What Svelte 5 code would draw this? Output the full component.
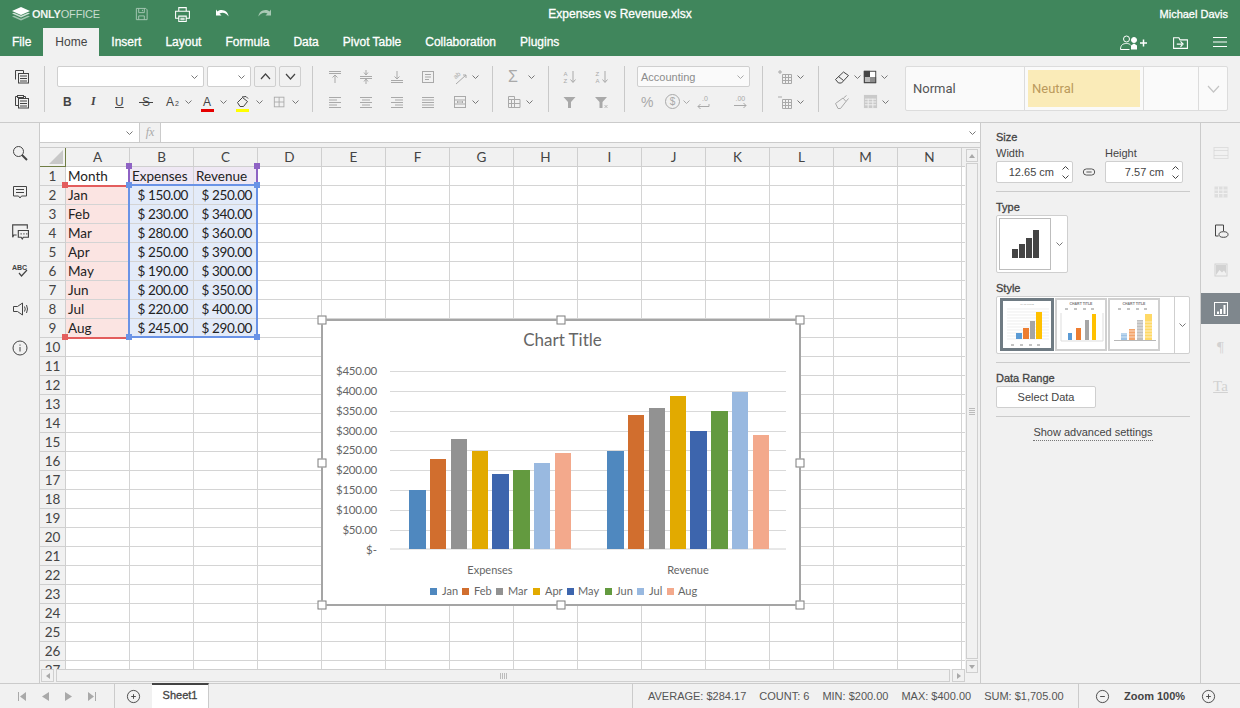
<script lang="ts">
  const TABS = ["File", "Home", "Insert", "Layout", "Formula", "Data", "Pivot Table", "Collaboration", "Plugins"];
  const COLS = ["A", "B", "C", "D", "E", "F", "G", "H", "I", "J", "K", "L", "M", "N", "O"];
  const DATA = [
    ["Month", "Expenses", "Revenue"],
    ["Jan", "$ 150.00", "$ 250.00"],
    ["Feb", "$ 230.00", "$ 340.00"],
    ["Mar", "$ 280.00", "$ 360.00"],
    ["Apr", "$ 250.00", "$ 390.00"],
    ["May", "$ 190.00", "$ 300.00"],
    ["Jun", "$ 200.00", "$ 350.00"],
    ["Jul", "$ 220.00", "$ 400.00"],
    ["Aug", "$ 245.00", "$ 290.00"],
  ];
  const ROWS = Array.from({ length: 27 }, (_, i) => i + 1);

  const COLORS = ["#4f88bf", "#d16e2e", "#929292", "#e2aa00", "#3d65ad", "#639a3f", "#99b9e0", "#f3a98c"];
  const MONTHS = ["Jan", "Feb", "Mar", "Apr", "May", "Jun", "Jul", "Aug"];
  const BAR_X = [
    [409, 17], [430, 16], [451, 16], [472, 16], [492, 17], [513, 17], [534, 16], [555, 16],
  ];
  const REV_X = [
    [607, 17], [628, 16], [649, 16], [670, 16], [690, 17], [711, 17], [732, 16], [753, 16],
  ];
  const EXPENSES = [150, 230, 280, 250, 190, 200, 220, 245];
  const REVENUE = [250, 340, 360, 390, 300, 350, 400, 290];
  const AXIS = [450, 400, 350, 300, 250, 200, 150, 100, 50];
  const GRID_Y = [371, 391, 411, 431, 450, 470, 490, 510, 530];
  const LEGEND = [
    [430, 442], [462, 474], [496, 508], [533, 545], [567, 578], [605, 616], [637, 649], [667, 678],
  ];
  const barH = (v: number) => Math.round(v * 0.393);

  const HANDLES = [
    [0, 0], [50, 0], [100, 0], [0, 50], [100, 50], [0, 100], [50, 100], [100, 100],
  ];
  const RED_H = [[25, 37], [25, 189]];
  const BLUE_H = [[89, 37], [217, 37], [89, 189], [217, 189]];
  const PURPLE_H = [[89, 18], [217, 18]];

  const T = 'font-family="Liberation Sans" stroke="none" fill="currentColor"';
  const ICONS: Record<string, string> = {
    copy: '<path d="M1.5 10.5v-9h8v2.5M3 6h-.1"/><rect x="4.5" y="4.5" width="10" height="9.5" fill="#f1f1f1"/><path d="M6 7h7M6 9.5h7M6 12h7"/>',
    paste: '<path d="M3.5 2.5h-2v9h2.5M9.5 2.5h2v2"/><rect x="3.5" y="1.5" width="6" height="2"/><rect x="4.5" y="4.5" width="10" height="9.5" fill="#f1f1f1"/><path d="M6 7h7M6 9.5h7M6 12h7"/>',
    alTop: '<path d="M2 2.5h12M2 4.5h12M8 14V6M5.5 8.5 8 6l2.5 2.5"/>',
    alMid: '<path d="M2 7.5h12M2 9.5h12M8 1v5M8 11v4M6 3.5 8 6l2-2.5M6 12.5 8 10l2 2.5"/>',
    alBot: '<path d="M2 11.5h12M2 13.5h12M8 2v8M5.5 7.5 8 10l2.5-2.5"/>',
    wrap: '<rect x="2.5" y="2.5" width="11" height="11"/><path d="M5 5.5h6M5 8h6M5 10.5h4"/>',
    bgrid: '<rect x="1.500" y="2.500" width="11" height="11"/><path d="M7 2.500v11M1.500 8h11"/>',
    orient: `<text x="2" y="8" font-size="6.5" transform="rotate(-40 6 7)" ${T}>ab</text><path d="M4 15 14 6M14 6h-3M14 6v3"/>`,
    left: '<path d="M2 3.5h12M2 6h8M2 8.5h12M2 11h8M2 13.5h12"/>',
    center: '<path d="M2 3.5h12M4 6h8M2 8.5h12M4 11h8M2 13.5h12"/>',
    right: '<path d="M2 3.5h12M6 6h8M2 8.5h12M6 11h8M2 13.5h12"/>',
    just: '<path d="M2 3.5h12M2 6h12M2 8.5h12M2 11h12M2 13.5h12"/>',
    merge: '<rect x="2.5" y="2.5" width="11" height="11"/><path d="M2.5 6h11M2.5 10h11M5 8h6M6 7l-1 1 1 1M10 7l1 1-1 1"/>',
    table: '<path d="M2.5 2.5h6v3h5.500v8h-11.500zM2.500 5.500h6M8.500 5.500v8M2.500 9.500h11.500"/><path d="M5.500 5.500v8"/>',
    sortAZ: `<text x="1.500" y="6.500" font-size="6" ${T}>A</text><text x="1.500" y="13.500" font-size="6" ${T}>Z</text><path d="M11 2v11M8.500 10.500 11 13.500l2.500-3"/>`,
    sortZA: `<text x="1.500" y="6.500" font-size="6" ${T}>Z</text><text x="1.500" y="13.500" font-size="6" ${T}>A</text><path d="M11 2v11M8.500 10.500 11 13.500l2.500-3"/>`,
    filter: '<path d="M1.500 3h12l-4.500 5v6h-3v-6z" fill="currentColor" stroke="none"/>',
    filterX: '<path d="M1 3h12l-4.500 5v6h-3v-6z" fill="currentColor" stroke="none"/><path d="M10.500 11l3 3M13.500 11l-3 3" stroke-width=".8"/>',
    decLess: `<text x="7" y="6.500" font-size="7" ${T}>.0</text><path d="M14 10v2.500H3M5.500 10 3 12.500 5.500 15"/>`,
    decMore: `<text x="3.500" y="6.500" font-size="7" ${T}>.00</text><path d="M2 11.500h12M11.500 9 14 11.500 11.500 14"/>`,
    rowAdd: '<path d="M1 3h4M3 1v4"/><path d="M5.500 5.500h9v9h-9zM8.500 5.500v9M11.500 5.500v9M5.500 8.500h9M5.500 11.500h9"/>',
    rowDel: '<path d="M1 3h4"/><path d="M5.500 5.500h9v9h-9zM8.500 5.500v9M11.500 5.500v9M5.500 8.500h9M5.500 11.500h9"/>',
    eraser: '<path d="M1.500 10.500 9.500 3l5 3.500-7 7.500h-3zM4.500 7.500l5 4"/>',
    checker: '<rect x="1.500" y="1.500" width="13" height="13" fill="#bbb"/><rect x="1" y="1" width="7" height="7" fill="currentColor" stroke="none"/><rect x="8" y="8" width="7" height="7" fill="#8c8c8c" stroke="none"/><rect x="8" y="1" width="7" height="7" fill="#fff" stroke="none"/><rect x="1.500" y="1.500" width="13" height="13"/>',
    brush: '<path d="M1.500 9.500 9 4l3 3.500-5.500 7h-2.500zM9.500 4l3-2.500M12 7.500l2.500-3"/>',
    tstyle: '<rect x="1" y="1" width="14" height="14" fill="currentColor" stroke="none" opacity=".55"/><path d="M2 5.500h12M2 8.500h12M2 11.500h12M5.500 5v10M10.500 5v10" stroke="#f1f1f1"/>',
    search: '<circle cx="6.500" cy="6.500" r="5"/><path d="M10 10l5 5" stroke-width="2"/>',
    comment: '<path d="M1.500 2.500h13v9.500h-5l-1.500 2-1.500-2h-5z"/><path d="M4 5.500h8M4 8.500h8"/>',
    chat: '<path d="M5 11.500H2.500l-1 2v-11h13V6"/><path d="M6.500 7.500h9v6h-4.500l-1 1.500-1-1.500h-2.500z" fill="#f1f1f1"/><path d="M8.500 10.500h1M11 10.500h1M13.500 10.500h1"/>',
    spell: `<text x="0" y="7.500" font-size="7" font-weight="700" ${T}>ABC</text><path d="M7 11l2.500 3L15 8" stroke-width="1.200"/>`,
    speak: '<path d="M1.500 5.500h4L10.500 2v12l-5-3.500h-4zM12.500 5.500q1.500 2.500 0 5M14.500 4q2 4 0 8"/>',
    info: '<circle cx="8" cy="8" r="7"/><path d="M8 7v4.500M8 4.500v1.200"/>',
    link: '<rect x="1.500" y="4.500" width="13" height="7" rx="3.500"/><path d="M5 8h6"/>',
    rHeader: '<rect x="1" y="2.500" width="14" height="11" opacity=".6"/><path d="M1 5.500h14M1 10.500h14" opacity=".6"/>',
    rTable: '<rect x="1.500" y="2.500" width="13" height="11" fill="currentColor" opacity=".6" stroke="none"/><path d="M1.500 6h13M1.500 9.500h13M5.500 2.500v11M10 2.500v11" stroke="#f1f1f1"/>',
    rShape: '<path d="M10.500 8V2H2.500v11h3"/><ellipse cx="10.500" cy="11.500" rx="4.500" ry="2.800"/>',
    rImage: '<rect x="2" y="2" width="12" height="12"/><path d="M3 13l3.500-5 2.500 2.500 2-2 2 3V3H3z" fill="currentColor" stroke="none"/>',
    rChart: '<rect x="1.500" y="1.500" width="13" height="13"/><path d="M4 10.500h2v2.500h-2zM7 8h2v5h-2zM10.500 4h2v9h-2z" fill="currentColor" stroke="none"/>',
    save: '<path d="M2.500 1.500h10l1.500 1.500v10.500h-11.500zM5 1.500v4.500h6v-4.500M5 13.500v-4h6v4M9 3v1.500"/>',
    print: '<path d="M4.500 5V1.500h7V5M4.500 11.500h-3v-6.500h13v6.500h-3M4.500 9.500h7v5h-7zM6 11.500h4M6 13h4"/>',
    undo: '<path d="M1 3.500v6h5.500l-2-2c3-1.500 6.500-1 9 3 0-5-6.500-8.500-11-5z" fill="currentColor" stroke="none"/>',
    redo: '<path d="M15 3.500v6h-5.500l2-2c-3-1.500-6.500-1-9 3 0-5 6.500-8.500 11-5z" fill="currentColor" stroke="none"/>',
    folder: '<path d="M1.500 3.500v10h13v-8h-7l-1-2zM4.500 9.500h5M8 7l2.500 2.500L8 12" />',
    plus: '<circle cx="8" cy="8" r="6.500"/><path d="M5.500 8h5M8 5.500v5"/>',
    minus: '<circle cx="8" cy="8" r="6.500"/><path d="M5.500 8h5"/>',
  };
</script>

{#snippet ico(name: string, size = 16)}
  <svg class="ico" width={size} height={size} viewBox="0 0 16 16" fill="none" stroke="currentColor">{@html ICONS[name]}</svg>
{/snippet}

{#snippet caret(color = "#777")}
  <svg class="caret" width="7" height="4" viewBox="0 0 7 4" fill="none" stroke={color}><path d="M.5.5l3 3 3-3" /></svg>
{/snippet}

<div class="app">
  <header class="title-bar">
    <div class="logo">
      <svg width="20" height="14" viewBox="0 0 20 14">
        <path d="M10 0l9 4-9 4-9-4z" fill="#fff" />
        <path d="M1 6.500l2-.8 7 3 7-3 2 .8-9 4z" fill="#fff" opacity=".75" />
        <path d="M1 9.500l2-.8 7 3 7-3 2 .8-9 4z" fill="#fff" opacity=".5" />
      </svg>
      <span class="logo-text">ONLY<span class="logo-thin">OFFICE</span></span>
    </div>
    <div class="quick">
      <span class="q off">{@render ico("save", 15)}</span>
      <span class="q">{@render ico("print", 17)}</span>
      <span class="q">{@render ico("undo", 16)}</span>
      <span class="q off">{@render ico("redo", 16)}</span>
    </div>
    <div class="doc-title">Expenses vs Revenue.xlsx</div>
    <div class="user">Michael Davis</div>
  </header>

  <nav class="tabs">
    {#each TABS as tab}
      <span class="tab" class:active={tab === "Home"}>{tab}</span>
    {/each}
    <div class="tabs-right">
      <svg width="28" height="15" viewBox="0 0 28 15" fill="none" stroke="#fff">
        <circle cx="6.500" cy="4" r="3" />
        <path d="M.5 14.500c0-5 3-6 6-6 1.500 0 3 .3 4 1.500M.5 14.500h9" />
        <circle cx="14" cy="5" r="2.500" fill="#fff" />
        <path d="M11 14.500v-4l3-2 3 2v4z" fill="#fff" stroke="none" />
        <path d="M20 8h7M23.500 4.500v7" stroke-width="1.500" />
      </svg>
      <span class="folder">{@render ico("folder", 17)}</span>
      <svg width="14" height="10" viewBox="0 0 14 10" stroke="#fff"><path d="M0 .5h14M0 5h14M0 9.500h14" /></svg>
    </div>
  </nav>

  <section class="toolbar">
    <div class="group g-clip">
      <div class="row"><span class="btn dark w24">{@render ico("copy")}</span></div>
      <div class="row"><span class="btn dark w24">{@render ico("paste")}</span></div>
    </div>

    <div class="group g-font">
      <div class="row gap3">
        <span class="combo font-name">{@render caret()}</span>
        <span class="combo font-size">{@render caret()}</span>
        <span class="step"><svg width="11" height="7" viewBox="0 0 11 7" fill="none" stroke="#444" stroke-width="1.200"><path d="M1 6l4.500-5L10 6" /></svg></span>
        <span class="step"><svg width="11" height="7" viewBox="0 0 11 7" fill="none" stroke="#444" stroke-width="1.200"><path d="M1 1l4.500 5L10 1" /></svg></span>
      </div>
      <div class="row fmt">
        <span class="f-btn b">B</span>
        <span class="f-btn i">I</span>
        <span class="f-btn u">U</span>
        <span class="f-btn s"><span>S</span></span>
        <span class="f-btn sub">A<small>2</small>{@render caret()}</span>
        <span class="f-btn color"><span class="letter">A</span><i class="bar red"></i>{@render caret()}</span>
        <span class="f-btn fill">
          <svg width="14" height="12" viewBox="0 0 14 12" fill="none" stroke="#444"><path d="M1.500 6.500 6.500 1.500l5 4-4 5H4z" /><path d="M6 1l4-.5 2 2" /></svg>
          <i class="bar yellow"></i>{@render caret()}
        </span>
        <span class="f-btn border off">{@render ico("bgrid", 14)}{@render caret()}</span>
      </div>
    </div>

    <div class="group off g-align">
      <div class="row">
        <span class="btn w31">{@render ico("alTop")}</span>
        <span class="btn w31">{@render ico("alMid")}</span>
        <span class="btn w31">{@render ico("alBot")}</span>
        <span class="btn w31">{@render ico("wrap")}</span>
        <span class="cbtn">{@render ico("orient")}{@render caret()}</span>
      </div>
      <div class="row">
        <span class="btn w31">{@render ico("left")}</span>
        <span class="btn w31">{@render ico("center")}</span>
        <span class="btn w31">{@render ico("right")}</span>
        <span class="btn w31">{@render ico("just")}</span>
        <span class="cbtn">{@render ico("merge")}{@render caret()}</span>
      </div>
    </div>

    <div class="group off g-sum">
      <div class="row"><span class="cbtn"><span class="sigma">Σ</span>{@render caret()}</span></div>
      <div class="row"><span class="cbtn">{@render ico("table")}{@render caret()}</span></div>
    </div>

    <div class="group off g-sort">
      <div class="row">
        <span class="btn w32">{@render ico("sortAZ")}</span>
        <span class="btn w32">{@render ico("sortZA")}</span>
      </div>
      <div class="row">
        <span class="btn w32">{@render ico("filter")}</span>
        <span class="btn w32">{@render ico("filterX")}</span>
      </div>
    </div>

    <div class="group off g-num">
      <div class="row"><span class="combo num-fmt">Accounting{@render caret("#aaa")}</span></div>
      <div class="row num-row">
        <span class="pct">%</span>
        <span class="dollar"><b>$</b></span>
        {@render caret("#aaa")}
        <span class="dec1">{@render ico("decLess")}</span>
        <span class="dec2">{@render ico("decMore")}</span>
      </div>
    </div>

    <div class="group off g-ins">
      <div class="row"><span class="cbtn">{@render ico("rowAdd")}{@render caret()}</span></div>
      <div class="row"><span class="cbtn">{@render ico("rowDel")}{@render caret()}</span></div>
    </div>

    <div class="group g-clear">
      <div class="row">
        <span class="cbtn dark w29">{@render ico("eraser")}{@render caret()}</span>
        <span class="cbtn dark">{@render ico("checker", 14)}{@render caret()}</span>
      </div>
      <div class="row">
        <span class="cbtn w29 off">{@render ico("brush")}</span>
        <span class="cbtn off">{@render ico("tstyle", 15)}{@render caret()}</span>
      </div>
    </div>

    <div class="gallery">
      <div class="style-cell normal">Normal</div>
      <div class="style-cell neutral"><span>Neutral</span></div>
      <div class="style-cell empty"></div>
      <div class="gallery-more">
        <svg width="13" height="8" viewBox="0 0 13 8" fill="none" stroke="#c4c4c4" stroke-width="1.200"><path d="M1 1l5.500 6L12 1" /></svg>
      </div>
    </div>
  </section>

  <div class="work">
    <aside class="left-rail">
      <span class="rail-btn">{@render ico("search", 16)}</span>
      <span class="rail-btn">{@render ico("comment", 16)}</span>
      <span class="rail-btn">{@render ico("chat", 18)}</span>
      <span class="rail-btn">{@render ico("spell", 16)}</span>
      <span class="rail-btn">{@render ico("speak", 16)}</span>
      <span class="rail-btn">{@render ico("info", 16)}</span>
    </aside>

    <main class="main">
      <div class="formula">
        <div class="name-box">{@render caret()}</div>
        <div class="fx">fx</div>
        <div class="formula-input">{@render caret()}</div>
      </div>

      <div class="sheet-row">
        <div class="sheet">
          <div class="grid">
            <div class="corner"><i></i></div>
            {#each COLS as c}
              <div class="col-head">{c}</div>
            {/each}
            {#each ROWS as r}
              <div class="row-head">{r}</div>
              {#each COLS as c, ci}
                {@const val = DATA[r - 1]?.[ci]}
                <div
                  class="cell"
                  class:cat={ci === 0 && r > 1 && r < 10}
                  class:hd={ci > 0 && ci < 3 && r === 1}
                  class:val={ci > 0 && ci < 3 && r > 1 && r < 10}
                >
                  {val ?? ""}
                </div>
              {/each}
            {/each}
          </div>

          <i class="sel red-line" style="left:25px;top:37px;width:64px;height:2px"></i>
          <i class="sel red-line" style="left:25px;top:189px;width:64px;height:2px"></i>
          <i class="sel purple-line" style="left:88px;top:19px;width:2px;height:18px"></i>
          <i class="sel purple-line" style="left:216px;top:19px;width:2px;height:18px"></i>
          <i class="blue-box"></i>
          {#each RED_H as h}
            <i class="dot red" style="left:{h[0]}px;top:{h[1]}px"></i>
          {/each}
          {#each PURPLE_H as h}
            <i class="dot purple" style="left:{h[0]}px;top:{h[1]}px"></i>
          {/each}
          {#each BLUE_H as h}
            <i class="dot blue" style="left:{h[0]}px;top:{h[1]}px"></i>
          {/each}

          <div class="chart">
            <svg width="476" height="283" viewBox="323 321 476 283" font-family="Lato, sans-serif">
              <text x="562.500" y="346" text-anchor="middle" font-size="17" fill="#666">Chart Title</text>
              {#each GRID_Y as y}
                <path d="M390 {y}.5H786" stroke="#d9d9d9" />
              {/each}
              <path d="M390 549H786" stroke="#d0d0d0" />
              {#each AXIS as a, i}
                <text x="377" y={GRID_Y[i] + 4} text-anchor="end" font-size="11.500" letter-spacing="-.25" fill="#666">${a}.00</text>
              {/each}
              <text x="377" y="554" text-anchor="end" font-size="11.500" fill="#666">$-</text>
              {#each EXPENSES as v, i}
                <rect x={BAR_X[i][0]} y={549 - barH(v)} width={BAR_X[i][1]} height={barH(v)} fill={COLORS[i]} />
              {/each}
              {#each REVENUE as v, i}
                <rect x={REV_X[i][0]} y={549 - barH(v)} width={REV_X[i][1]} height={barH(v)} fill={COLORS[i]} />
              {/each}
              <text x="490" y="574" text-anchor="middle" font-size="11" fill="#666">Expenses</text>
              <text x="688" y="574" text-anchor="middle" font-size="11" fill="#666">Revenue</text>
              {#each MONTHS as m, i}
                <rect x={LEGEND[i][0]} y="588" width="7" height="7" fill={COLORS[i]} />
                <text x={LEGEND[i][1]} y="595" font-size="11" fill="#666">{m}</text>
              {/each}
            </svg>
            {#each HANDLES as h}
              <i class="handle" style="left:calc({h[0]}% + {(h[0] - 50) / 50}px);top:calc({h[1]}% + {(h[1] - 50) / 50}px)"></i>
            {/each}
          </div>
        </div>

        <div class="vscroll">
          <span class="sb-btn"><i class="arr up"></i></span>
          <span class="v-thumb"><i class="grip-h"></i></span>
          <span class="sb-btn"><i class="arr down"></i></span>
        </div>
      </div>

      <div class="hscroll">
        <span class="sb-btn"><i class="arr lft"></i></span>
        <span class="h-thumb"><i class="grip-v"></i></span>
        <span class="sb-btn"><i class="arr rgt"></i></span>
      </div>
    </main>

    <aside class="panel">
      <div class="p-head">Size</div>
      <div class="size-row">
        <div class="field">
          <span class="f-label">Width</span>
          <div class="spin"><span>12.65 cm</span>
            <span class="arrows">
              <svg width="7" height="4" viewBox="0 0 7 4" fill="none" stroke="#444"><path d="M.5 3.500l3-3 3 3" /></svg>
              <svg width="7" height="4" viewBox="0 0 7 4" fill="none" stroke="#444"><path d="M.5.5l3 3 3-3" /></svg>
            </span>
          </div>
        </div>
        <span class="link">{@render ico("link", 14)}</span>
        <div class="field">
          <span class="f-label">Height</span>
          <div class="spin"><span>7.57 cm</span>
            <span class="arrows">
              <svg width="7" height="4" viewBox="0 0 7 4" fill="none" stroke="#444"><path d="M.5 3.500l3-3 3 3" /></svg>
              <svg width="7" height="4" viewBox="0 0 7 4" fill="none" stroke="#444"><path d="M.5.5l3 3 3-3" /></svg>
            </span>
          </div>
        </div>
      </div>
      <hr />

      <div class="p-head">Type</div>
      <div class="type-box">
        <div class="type-thumb">
          <svg width="50" height="50" viewBox="0 0 50 50" fill="#444">
            <rect x="12" y="30" width="6" height="9" />
            <rect x="19" y="25" width="6" height="14" />
            <rect x="26" y="19" width="6" height="20" />
            <rect x="33" y="11" width="6" height="28" />
          </svg>
        </div>
        {@render caret()}
      </div>

      <div class="p-head">Style</div>
      <div class="style-box">
        <div class="thumbs">
          <div class="thumb selected">
            <svg width="48" height="47" viewBox="0 0 48 47" font-family="Liberation Sans">
              <text x="24" y="4" text-anchor="middle" font-size="2.500" fill="#999">MAIN TITLE</text>
              {#each [8, 11, 14, 17, 20, 23, 26, 29, 32, 35, 38] as y}
                <path d="M4 {y}H46" stroke="#e2e2e2" stroke-width=".6" />
              {/each}
              <rect x="13" y="32" width="6" height="6" fill="#5b9bd5" />
              <rect x="20" y="27" width="6" height="11" fill="#ed7d31" />
              <rect x="27" y="20" width="5" height="18" fill="#a5a5a5" />
              <rect x="33" y="11" width="6" height="27" fill="#ffc000" />
              <path d="M8 44h3M17 44h3M26 44h3M34 44h3" stroke="#888" />
            </svg>
          </div>
          <div class="thumb">
            <svg width="48" height="47" viewBox="0 0 48 47" font-family="Liberation Sans">
              <text x="24" y="5" text-anchor="middle" font-size="3.500" font-weight="700" fill="#777">CHART TITLE</text>
              <path d="M8 9h3M17 9h3M26 9h3M34 9h3" stroke="#888" />
              <path d="M4 13v28h42V13" stroke="#ddd" fill="none" />
              <rect x="11" y="33" width="4" height="7" fill="#5b9bd5" />
              <rect x="19" y="28" width="5" height="12" fill="#ed7d31" />
              <rect x="28" y="20" width="4" height="20" fill="#a5a5a5" />
              <rect x="35" y="14" width="4" height="26" fill="#ffc000" />
            </svg>
          </div>
          <div class="thumb">
            <svg width="48" height="47" viewBox="0 0 48 47" font-family="Liberation Sans">
              <text x="24" y="5" text-anchor="middle" font-size="3.500" font-weight="700" fill="#777">CHART TITLE</text>
              <path d="M8 9h3M17 9h3M26 9h3M34 9h3" stroke="#888" />
              <rect x="11" y="33" width="6" height="7" fill="#9dc3e6" />
              <rect x="19" y="29" width="6" height="11" fill="#f4a46a" />
              <rect x="27" y="20" width="6" height="20" fill="#bfbfbf" />
              <rect x="35" y="14" width="7" height="26" fill="#ffd966" />
              <path d="M10 22h34M10 25h34M10 28h34M10 31h34M10 34h34M10 37h34" stroke="#fff" stroke-width=".6" />
              <path d="M4 40.500h42" stroke="#999" stroke-width=".7" />
            </svg>
          </div>
        </div>
        <div class="style-more">{@render caret()}</div>
      </div>
      <hr />

      <div class="p-head">Data Range</div>
      <div class="select-data">Select Data</div>
      <hr />
      <div class="advanced"><span>Show advanced settings</span></div>
    </aside>

    <aside class="right-rail">
      <span class="r-btn faint">{@render ico("rHeader", 16)}</span>
      <span class="r-btn faint">{@render ico("rTable", 16)}</span>
      <span class="r-btn shape">{@render ico("rShape", 16)}</span>
      <span class="r-btn faint">{@render ico("rImage", 16)}</span>
      <span class="r-btn on">{@render ico("rChart", 16)}</span>
      <span class="r-btn faint glyph">¶</span>
      <span class="r-btn faint glyph ta">Ta</span>
    </aside>
  </div>

  <footer class="status">
    <div class="nav">
      <svg width="8" height="9" viewBox="0 0 8 9" fill="#a9a9a9"><path d="M0 0h1v9H0zM8 0v9L2 4.500z" /></svg>
      <svg width="7" height="9" viewBox="0 0 7 9" fill="#a9a9a9"><path d="M7 0v9L0 4.500z" /></svg>
      <svg width="7" height="9" viewBox="0 0 7 9" fill="#a9a9a9"><path d="M0 0v9l7-4.500z" /></svg>
      <svg width="8" height="9" viewBox="0 0 8 9" fill="#a9a9a9"><path d="M8 0H7v9h1zM0 0v9l6-4.500z" /></svg>
    </div>
    <div class="add">{@render ico("plus", 15)}</div>
    <div class="sheet-tab">Sheet1</div>
    <div class="stats">
      <span>AVERAGE: $284.17</span>
      <span>COUNT: 6</span>
      <span>MIN: $200.00</span>
      <span>MAX: $400.00</span>
      <span>SUM: $1,705.00</span>
    </div>
    <div class="zoom">
      {@render ico("minus", 15)}
      <b>Zoom 100%</b>
      {@render ico("plus", 15)}
    </div>
  </footer>
</div>

<style>
  :global(body) {
    margin: 0;
    background: #f1f1f1;
  }

  .app {
    width: 1240px;
    height: 708px;
    display: flex;
    flex-direction: column;
    overflow: hidden;
    font-family: "Liberation Sans", Arial, sans-serif;
    font-size: 11px;
    color: #444;
    background: #f1f1f1;
  }

  .ico,
  .caret {
    display: block;
    flex: none;
  }
  i {
    display: block;
  }

  /* title bar */
  .title-bar {
    position: relative;
    height: 28px;
    display: flex;
    align-items: center;
    background: #40865c;
    color: #fff;
  }
  .logo {
    display: flex;
    align-items: center;
    gap: 1px;
    padding-left: 11px;
    width: 133px;
    box-sizing: border-box;
  }
  .logo-text {
    font-size: 11px;
    font-weight: 700;
    letter-spacing: -0.2px;
    color: #f1f5f2;
  }
  .logo-thin {
    color: #c9dccf;
    font-weight: 400;
  }
  .quick {
    display: flex;
    align-items: center;
    gap: 25px;
  }
  .q {
    width: 16px;
    display: flex;
    justify-content: center;
  }
  .q.off {
    color: #a9c9b5;
  }
  .doc-title {
    position: absolute;
    left: 0;
    right: 0;
    text-align: center;
    font-size: 12px;
    -webkit-text-stroke: 0.3px #fff;
  }
  .user {
    margin-left: auto;
    padding-right: 12px;
    font-size: 11px;
    -webkit-text-stroke: 0.3px #fff;
  }

  /* tabs */
  .tabs {
    height: 28px;
    display: flex;
    align-items: center;
    background: #40865c;
    color: #fff;
    font-size: 12px;
  }
  .tab {
    height: 28px;
    line-height: 28px;
    padding: 0 12px;
    -webkit-text-stroke: 0.3px #fff;
  }
  .tab.active {
    background: #f1f1f1;
    color: #444;
    -webkit-text-stroke: 0;
  }
  .tabs-right {
    margin-left: auto;
    display: flex;
    align-items: center;
    padding-right: 13px;
    gap: 24px;
  }
  .folder {
    display: block;
  }

  /* toolbar */
  .toolbar {
    flex: none;
    height: 67px;
    display: flex;
    align-items: flex-start;
    padding-top: 10px;
    box-sizing: border-box;
    border-bottom: 1px solid #cbcbcb;
  }
  .group {
    height: 46px;
    flex: none;
    display: flex;
    flex-direction: column;
    justify-content: space-between;
    border-right: 1px solid #c9c9c9;
    box-sizing: border-box;
    color: #444;
  }
  .row {
    display: flex;
    align-items: center;
    height: 21px;
  }
  .gap3 {
    gap: 3px;
  }
  .off {
    color: #a9a9a9;
  }
  .dark {
    color: #444;
  }
  .btn {
    display: flex;
    justify-content: center;
    align-items: center;
    height: 21px;
  }
  .w24 {
    width: 24px;
  }
  .w31 {
    width: 31px;
  }
  .w32 {
    width: 32px;
  }
  .w29 {
    width: 29px;
  }
  .cbtn {
    display: flex;
    align-items: center;
    gap: 4px;
    height: 21px;
  }

  .g-clip {
    width: 45px;
    padding-left: 10px;
  }
  .g-font {
    width: 268px;
    padding-left: 12px;
  }
  .g-align {
    width: 180px;
    padding-left: 6px;
  }
  .g-align .cbtn {
    padding-left: 9px;
  }
  .g-sum {
    width: 56px;
    padding-left: 13px;
  }
  .g-sort {
    width: 76px;
    padding-left: 5px;
  }
  .g-num {
    width: 138px;
    padding-left: 12px;
  }
  .g-ins {
    width: 56px;
    padding-left: 14px;
  }
  .g-clear {
    width: 77px;
    padding-left: 15px;
    border-right: 0;
  }

  .combo {
    display: flex;
    align-items: center;
    justify-content: flex-end;
    height: 21px;
    padding-right: 5px;
    box-sizing: border-box;
    background: #fff;
    border: 1px solid #cfcfcf;
    border-radius: 2px;
  }
  .font-name {
    width: 147px;
  }
  .font-size {
    width: 44px;
  }
  .num-fmt {
    width: 113px;
    justify-content: space-between;
    padding-left: 3px;
    background: #fafafa;
    font-size: 11px;
    color: #8c8c8c;
  }
  .step {
    width: 22px;
    height: 21px;
    box-sizing: border-box;
    border: 1px solid #cfcfcf;
    border-radius: 2px;
    display: flex;
    align-items: center;
    justify-content: center;
  }
  .fmt {
    padding-left: 6px;
    font-size: 12px;
  }
  .f-btn {
    position: relative;
    display: flex;
    align-items: center;
    height: 21px;
    flex: none;
  }
  .f-btn.b {
    width: 27px;
    font-weight: 700;
  }
  .f-btn.i {
    width: 25px;
    font-style: italic;
    padding-left: 1px;
    box-sizing: border-box;
    font-family: "Liberation Serif", serif;
    font-weight: 700;
  }
  .f-btn.u {
    width: 27px;
    text-decoration: underline;
  }
  .f-btn.s {
    width: 24px;
  }
  .f-btn.s span {
    position: relative;
  }
  .f-btn.s span::after {
    content: "";
    position: absolute;
    left: -3px;
    right: -3px;
    top: 7px;
    border-top: 1px solid #444;
  }
  .f-btn.sub {
    width: 35px;
  }
  .f-btn.sub small {
    font-size: 7px;
    margin: 4px 6px 0 1px;
  }
  .f-btn.color {
    width: 35px;
    gap: 7px;
  }
  .letter {
    width: 12px;
    text-align: center;
  }
  .f-btn.fill {
    width: 37px;
    gap: 6px;
  }
  .f-btn.border {
    gap: 5px;
    color: #a9a9a9;
  }
  .bar {
    position: absolute;
    left: 0;
    bottom: 0;
    width: 13px;
    height: 3px;
  }
  .bar.red {
    background: #e60000;
  }
  .bar.yellow {
    background: #ffff00;
  }

  .sigma {
    font-size: 16px;
    width: 14px;
    text-align: center;
    margin-right: 4px;
  }
  .num-row {
    position: relative;
    font-size: 14px;
  }
  .pct {
    margin-left: 4px;
    width: 24px;
  }
  .dollar {
    width: 13px;
    height: 13px;
    border: 1px solid currentColor;
    border-radius: 50%;
    display: flex;
    align-items: center;
    justify-content: center;
    margin-right: 3px;
    font-size: 10px;
  }
  .dollar b {
    font-weight: 400;
  }
  .dec1 {
    margin-left: 5px;
  }
  .dec2 {
    margin-left: 21px;
  }

  .gallery {
    margin-left: 9px;
    width: 323px;
    height: 45px;
    flex: none;
    display: flex;
    box-sizing: border-box;
    background: #fafafa;
    border: 1px solid #dcdcdc;
    border-radius: 2px;
    font-family: Roboto, "Liberation Sans", sans-serif;
    font-size: 13px;
  }
  .style-cell {
    box-sizing: border-box;
    border-right: 1px solid #dcdcdc;
    display: flex;
    align-items: center;
  }
  .normal {
    width: 119px;
    padding-left: 7px;
    color: #555;
  }
  .neutral {
    width: 119px;
    padding: 3px;
  }
  .neutral span {
    flex: 1;
    align-self: stretch;
    display: flex;
    align-items: center;
    padding-left: 4px;
    background: #faebb8;
    color: #bb9a5c;
  }
  .empty {
    width: 55px;
  }
  .gallery-more {
    flex: 1;
    display: flex;
    align-items: center;
    justify-content: center;
  }

  /* work area */
  .work {
    flex: 1;
    display: flex;
    min-height: 0;
  }
  .left-rail {
    width: 40px;
    flex: none;
    box-sizing: border-box;
    border-right: 1px solid #cbcbcb;
    display: flex;
    flex-direction: column;
    align-items: center;
    padding-top: 20px;
    gap: 19px;
  }
  .rail-btn {
    height: 20px;
    display: flex;
    align-items: center;
    justify-content: center;
    color: #444;
  }

  .main {
    width: 940px;
    flex: none;
    display: flex;
    flex-direction: column;
    min-height: 0;
  }
  .formula {
    height: 25px;
    flex: none;
    display: flex;
    box-sizing: border-box;
    border-bottom: 1px solid #cbcbcb;
    padding-bottom: 4px;
    background: #f1f1f1;
    position: relative;
  }
  .formula::after {
    content: "";
    position: absolute;
    left: 0;
    right: 0;
    bottom: 4px;
    border-top: 1px solid #cbcbcb;
  }
  .name-box {
    width: 100px;
    background: #fff;
    display: flex;
    align-items: center;
    justify-content: flex-end;
    padding-right: 6px;
    box-sizing: border-box;
    border-right: 1px solid #cbcbcb;
  }
  .fx {
    width: 21px;
    text-align: center;
    font-family: "Liberation Serif", serif;
    font-style: italic;
    font-size: 12px;
    line-height: 18px;
    color: #aaa;
    box-sizing: border-box;
    border-right: 1px solid #cbcbcb;
  }
  .formula-input {
    flex: 1;
    background: #fff;
    display: flex;
    align-items: center;
    justify-content: flex-end;
    padding-right: 4px;
  }

  .sheet-row {
    height: 521px;
    flex: none;
    display: flex;
  }
  .sheet {
    position: relative;
    width: 925px;
    flex: none;
    overflow: hidden;
    background: #fff;
  }
  .grid {
    display: grid;
    grid-template-columns: 26px repeat(15, 64px);
    grid-auto-rows: 19px;
    font-family: Lato, sans-serif;
    font-size: 13.5px;
    color: #222;
  }
  .corner {
    background: #f1f1f1;
    box-sizing: border-box;
    border-right: 1px solid #6f7d44;
    border-bottom: 1px solid #6f7d44;
    position: relative;
  }
  .corner i {
    position: absolute;
    right: 2px;
    bottom: 2px;
    width: 0;
    height: 0;
    border-left: 14px solid transparent;
    border-bottom: 14px solid #c8c8c8;
  }
  .col-head,
  .row-head {
    background: #f1f1f1;
    box-sizing: border-box;
    border-right: 1px solid #cfcfcf;
    border-bottom: 1px solid #cfcfcf;
    text-align: center;
    line-height: 18px;
    color: #444;
  }
  .cell {
    box-sizing: border-box;
    border-right: 1px solid #d4d4d4;
    border-bottom: 1px solid #d4d4d4;
    padding: 0 2px;
    line-height: 18px;
    white-space: nowrap;
    overflow: hidden;
  }
  .cat {
    background: #fbe4e2;
  }
  .hd {
    background: #efe8f4;
  }
  .val {
    background: #e3ebf9;
    text-align: right;
    padding-right: 5px;
    letter-spacing: -0.4px;
  }

  .sel {
    position: absolute;
  }
  .red-line {
    background: #e35d5d;
  }
  .purple-line {
    background: #8e62c4;
  }
  .blue-box {
    position: absolute;
    left: 88px;
    top: 36px;
    width: 130px;
    height: 154px;
    box-sizing: border-box;
    border: 2px solid #6a93e6;
  }
  .dot {
    position: absolute;
    width: 6px;
    height: 6px;
    margin: -3px 0 0 -3px;
    box-sizing: content-box;
  }
  .dot.red {
    background: #e35d5d;
  }
  .dot.blue {
    background: #6a93e6;
  }
  .dot.purple {
    background: #8e62c4;
  }

  .chart {
    position: absolute;
    left: 281px;
    top: 171px;
    width: 480px;
    height: 287px;
    box-sizing: border-box;
    border: 2px solid #a5a5a5;
    background: #fff;
  }
  .chart svg {
    display: block;
  }
  .handle {
    position: absolute;
    width: 9px;
    height: 9px;
    box-sizing: border-box;
    transform: translate(-50%, -50%);
    background: #fff;
    border: 1px solid #7d7d7d;
  }

  .vscroll {
    width: 15px;
    flex: none;
    display: flex;
    flex-direction: column;
    gap: 1px;
    padding: 1px 2px 0 1px;
    box-sizing: border-box;
    height: 525px;
    position: relative;
    z-index: 1;
  }
  .sb-btn {
    flex: none;
    width: 12px;
    height: 13px;
    box-sizing: border-box;
    border: 1px solid #cfcfcf;
    display: flex;
    align-items: center;
    justify-content: center;
  }
  .v-thumb {
    flex: 1;
    box-sizing: border-box;
    border: 1px solid #cfcfcf;
    display: flex;
    align-items: center;
    justify-content: center;
  }
  .grip-h {
    width: 6px;
    height: 7px;
    background: repeating-linear-gradient(#bbb 0 1px, transparent 1px 2px);
  }
  .grip-v {
    width: 7px;
    height: 6px;
    background: repeating-linear-gradient(90deg, #bbb 0 1px, transparent 1px 2px);
  }
  .arr {
    width: 0;
    height: 0;
    border: 3px solid transparent;
  }
  .arr.up {
    border-bottom: 4px solid #a9a9a9;
    border-top: 0;
  }
  .arr.down {
    border-top: 4px solid #a9a9a9;
    border-bottom: 0;
  }
  .arr.lft {
    border-right: 4px solid #a9a9a9;
    border-left: 0;
  }
  .arr.rgt {
    border-left: 4px solid #a9a9a9;
    border-right: 0;
  }

  .hscroll {
    height: 14px;
    width: 925px;
    flex: none;
    box-sizing: border-box;
    display: flex;
    gap: 2px;
    padding-left: 1px;
    background: #f1f1f1;
  }
  .hscroll .sb-btn {
    height: 13px;
    width: 13px;
  }
  .h-thumb {
    flex: 1;
    height: 13px;
    box-sizing: border-box;
    border: 1px solid #cfcfcf;
    display: flex;
    align-items: center;
    justify-content: center;
  }

  /* settings panel */
  .panel {
    width: 221px;
    flex: none;
    box-sizing: border-box;
    border-left: 1px solid #cbcbcb;
    border-right: 1px solid #cbcbcb;
    padding: 7px 10px 0 15px;
  }
  .p-head {
    height: 14px;
    line-height: 14px;
    -webkit-text-stroke: 0.3px #444;
  }
  .size-row {
    display: flex;
    margin-top: 2px;
  }
  .f-label {
    display: block;
    height: 15px;
    line-height: 14px;
  }
  .spin {
    height: 22px;
    box-sizing: border-box;
    background: #fff;
    border: 1px solid #cfcfcf;
    border-radius: 2px;
    display: flex;
    align-items: center;
    justify-content: flex-end;
    gap: 8px;
    padding-right: 3px;
  }
  .size-row .field:first-child .spin {
    width: 77px;
  }
  .size-row .field:last-child .spin {
    width: 78px;
  }
  .arrows {
    display: flex;
    flex-direction: column;
    gap: 5px;
  }
  .link {
    width: 32px;
    display: flex;
    justify-content: center;
    align-items: center;
    height: 22px;
    margin-top: 15px;
  }
  hr {
    border: 0;
    border-top: 1px solid #cbcbcb;
    margin: 8px 0;
  }
  .type-box {
    width: 72px;
    height: 58px;
    margin-top: 1px;
    margin-bottom: 8px;
    box-sizing: border-box;
    background: #fff;
    border: 1px solid #cfcfcf;
    border-radius: 2px;
    display: flex;
    align-items: center;
    padding-left: 2px;
    gap: 5px;
  }
  .type-thumb {
    width: 52px;
    height: 52px;
    box-sizing: border-box;
    border: 1px solid #bdbdbd;
  }
  .type-thumb svg {
    display: block;
  }
  .style-box {
    height: 58px;
    margin-top: 1px;
    box-sizing: border-box;
    background: #fff;
    border: 1px solid #cfcfcf;
    border-radius: 2px;
    display: flex;
    justify-content: space-between;
  }
  .thumbs {
    display: flex;
    gap: 1px;
    padding: 1px 0 0 3px;
  }
  .thumb {
    width: 52px;
    height: 53px;
    box-sizing: border-box;
    border: 2px solid #d0d0d0;
  }
  .thumb svg {
    display: block;
  }
  .thumb.selected {
    width: 54px;
    border: 3px solid #6f7b83;
  }
  .style-more {
    width: 14px;
    border-left: 1px solid #cfcfcf;
    display: flex;
    align-items: center;
    justify-content: center;
  }
  .select-data {
    width: 100px;
    height: 22px;
    margin-top: 1px;
    line-height: 20px;
    box-sizing: border-box;
    text-align: center;
    background: #fff;
    border: 1px solid #cfcfcf;
    border-radius: 2px;
  }
  .advanced {
    text-align: center;
  }
  .advanced span {
    display: inline-block;
    line-height: 14px;
    border-bottom: 1px dotted #777;
    padding-bottom: 1px;
  }

  .right-rail {
    flex: 1;
    display: flex;
    flex-direction: column;
    padding-top: 14px;
  }
  .r-btn {
    height: 31px;
    margin-bottom: 8px;
    display: flex;
    align-items: center;
    justify-content: center;
  }
  .faint {
    color: #d2d2d2;
  }
  .shape {
    color: #444;
  }
  .r-btn.on {
    background: #7f878d;
    color: #fff;
  }
  .glyph {
    font-size: 15px;
    font-family: "Liberation Serif", serif;
  }
  .ta {
    text-decoration: underline;
  }

  /* status bar */
  .status {
    height: 25px;
    flex: none;
    display: flex;
    align-items: stretch;
    box-sizing: border-box;
    border-top: 1px solid #cbcbcb;
    font-size: 11px;
  }
  .nav {
    width: 115px;
    box-sizing: border-box;
    border-right: 1px solid #cbcbcb;
    display: flex;
    align-items: center;
    gap: 16px;
    padding-left: 18px;
  }
  .add {
    width: 37px;
    display: flex;
    align-items: center;
    justify-content: center;
    box-sizing: border-box;
  }
  .sheet-tab {
    width: 57px;
    box-sizing: border-box;
    background: #fff;
    border-top: 2px solid #444;
    margin-top: -1px;
    border-right: 1px solid #cbcbcb;
    text-align: center;
    line-height: 20px;
    -webkit-text-stroke: 0.3px #444;
  }
  .stats {
    margin-left: auto;
    width: 447px;
    box-sizing: border-box;
    border-left: 1px solid #cbcbcb;
    border-right: 1px solid #cbcbcb;
    display: flex;
    align-items: center;
    gap: 13px;
    padding-left: 15px;
    white-space: nowrap;
    color: #555;
  }
  .zoom {
    width: 161px;
    flex: none;
    box-sizing: border-box;
    display: flex;
    align-items: center;
    padding-left: 16px;
    gap: 14px;
  }
  .zoom b {
    font-weight: 700;
    width: 63px;
    white-space: nowrap;
  }
</style>
